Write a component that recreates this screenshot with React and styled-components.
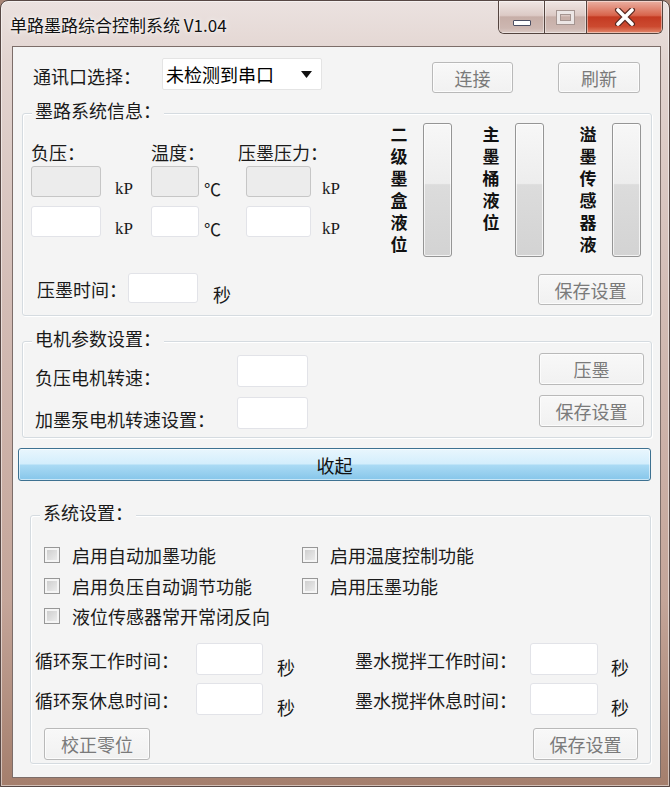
import React from "react";
import styled, { createGlobalStyle } from "styled-components";

const FONT = `"Noto Sans CJK SC", "Noto Sans", sans-serif`;

const GlobalStyle = createGlobalStyle`
  html, body { margin: 0; padding: 0; }
  body {
    width: 670px;
    height: 787px;
    overflow: hidden;
    background: #a88677;
    font-family: ${FONT};
  }
`;

const Window = styled.div`
  box-sizing: border-box;
  width: 670px;
  height: 787px;
  border: 1px solid #574845;
  border-radius: 8px 8px 0 0;
  background: linear-gradient(180deg, #ebe2e0 0px, #e2d4d0 60px, #d3bcb5 300px, #c4a599 600px, #a47e6c 787px);
  box-shadow: inset 0 0 0 1px rgba(255, 255, 255, 0.5);
  display: flex;
  flex-direction: column;
`;

const TitleBar = styled.div`
  height: 45px;
  flex-shrink: 0;
  display: flex;
  align-items: flex-start;
`;

const Title = styled.div`
  margin: 12px 0 0 9px;
  font-size: 17px;
  line-height: 24px;
  color: #111;
  text-shadow: 0 0 6px rgba(255, 255, 255, 0.9), 0 0 2px rgba(255, 255, 255, 0.9);
`;

const CaptionGroup = styled.div`
  margin-left: auto;
  margin-right: 6px;
  height: 32px;
  display: flex;
  border: 1px solid #54443f;
  border-top: none;
  border-radius: 0 0 6px 6px;
  overflow: hidden;
`;

const CaptionButton = styled.div`
  width: ${p => p.$w}px;
  display: flex;
  align-items: center;
  justify-content: center;
  border-left: ${p => (p.$first ? "none" : "1px solid #54443f")};
  box-shadow: inset 0 0 0 1px rgba(255, 255, 255, 0.45);
  background: ${p =>
    p.$close
      ? "linear-gradient(180deg, #eab0a2 0%, #d8644c 45%, #c43a22 50%, #cc4a30 80%, #e2886c 100%)"
      : "linear-gradient(180deg, #efe6e4 0%, #dccac5 45%, #c7aea7 50%, #cdb7b1 85%, #dccbc6 100%)"};
`;

const MinGlyph = styled.span`
  width: 16px;
  height: 4px;
  margin-top: 12px;
  background: #fff;
  border: 1px solid #4c4f63;
  border-radius: 1px;
`;

const MaxGlyph = styled.span`
  box-sizing: border-box;
  width: 17px;
  height: 13px;
  border: 3px solid #ece6e5;
  box-shadow: 0 0 0 1px #a59591, inset 0 0 0 1px #a59591;
`;

const Client = styled.div`
  box-sizing: border-box;
  margin: 0 8px 0 11px;
  height: 732px;
  border: 1px solid #7c6d69;
  background: #f4f4f4;
  display: flex;
  flex-direction: column;
  align-items: flex-start;
`;

const Text = styled.span`
  font-size: 18px;
  line-height: 24px;
  color: #1a1a1a;
  white-space: nowrap;
`;

const TopBar = styled.div`
  display: flex;
  align-items: center;
  height: 35px;
  margin-top: 11px;
  padding-left: 20px;
`;

const Combo = styled.div`
  box-sizing: border-box;
  align-self: flex-start;
  margin-left: 21px;
  width: 160px;
  height: 32px;
  background: #fff;
  border: 1px solid #e4e4e4;
  border-radius: 2px;
  display: flex;
  align-items: center;
  justify-content: space-between;
  padding: 0 9px 0 3px;
  font-size: 18px;
  color: #000;
`;

const Button = styled.button`
  box-sizing: border-box;
  flex-shrink: 0;
  width: ${p => p.$w}px;
  height: ${p => p.$h || 31}px;
  margin: 0;
  margin-left: ${p => (p.$ml === "auto" ? "auto" : `${p.$ml || 0}px`)};
  align-self: ${p => p.$self || "auto"};
  padding: 0;
  border: 1px solid #b9b9b9;
  border-radius: 3px;
  background: linear-gradient(180deg, #f8f8f8, #f1f1f1);
  box-shadow: inset 0 0 0 1px #fcfcfc;
  color: #7a7a7a;
  font-family: ${FONT};
  font-size: 18px;
  line-height: 1;
`;

const Input = styled.input`
  box-sizing: border-box;
  flex-shrink: 0;
  width: ${p => p.$w}px;
  height: ${p => p.$h || 31}px;
  margin: 0;
  padding: 0 4px;
  border: 1px solid ${p => (p.readOnly ? "#c6c6c6" : "#e2e3e8")};
  border-radius: 3px;
  background: ${p => (p.readOnly ? "#ececec" : "#fff")};
  font-family: ${FONT};
  font-size: 16px;
  outline: none;
`;

const GroupBox = styled.div`
  position: relative;
  box-sizing: border-box;
  flex-shrink: 0;
  width: ${p => p.$w}px;
  height: ${p => p.$h}px;
  margin: ${p => p.$mt}px 0 0 ${p => p.$ml}px;
  border: 1px solid #d5dbe0;
  border-radius: 3px;
  box-shadow: inset 1px 1px 0 #fff, 1px 1px 0 #fff;
  display: flex;
  flex-direction: ${p => p.$dir || "column"};
`;

const Legend = styled.span`
  position: absolute;
  top: -16px;
  left: 9px;
  padding: 0 3px;
  background: #f4f4f4;
  font-size: 18px;
  line-height: 24px;
  color: #1a1a1a;
`;

/* 墨路系统信息 */
const TopArea = styled.div`
  display: flex;
  margin-top: 9px;
  height: 134px;
`;

const Readings = styled.div`
  display: flex;
  flex-direction: column;
  padding: 17px 0 0 8px;
`;

const ReadRow = styled.div`
  display: grid;
  grid-template-columns: 120px 95px auto;
  height: ${p => p.$h}px;
  margin-top: ${p => p.$mt}px;
`;

const ReadCell = styled.div`
  display: flex;
  align-items: flex-end;
`;

const ShiftedText = styled.span`
  margin-left: -8px;
  font-size: 18px;
  line-height: 24px;
  color: #1a1a1a;
  white-space: nowrap;
`;

const Unit = styled.span`
  margin-left: ${p => p.$ml}px;
  margin-bottom: -2px;
  font-family: ${p => (p.$cjk ? FONT : `"Liberation Serif", "Noto Sans CJK SC", serif`)};
  font-size: 17px;
  line-height: 20px;
  color: #1a1a1a;
`;

const Levels = styled.div`
  display: flex;
  margin-left: auto;
  padding-right: 10px;
`;

const Level = styled.div`
  display: flex;
  gap: 15px;
  margin-left: ${p => p.$ml}px;
`;

const VLabel = styled.div`
  width: 18px;
  font-size: 17px;
  font-weight: bold;
  line-height: 22px;
  text-align: center;
  word-break: break-all;
  color: #111;
`;

const LevelBar = styled.div`
  box-sizing: border-box;
  width: 29px;
  height: 134px;
  border: 1px solid #959595;
  border-radius: 3px;
  background: linear-gradient(180deg, #f7f7f7 0%, #ededed 45%, #dcdcdc 46%, #d3d3d3 100%);
  box-shadow: inset 0 0 0 1px rgba(255, 255, 255, 0.7);
`;

const BottomRow = styled.div`
  display: flex;
  align-items: center;
  height: 32px;
  margin-top: 16px;
  padding: 0 8px 0 14px;
`;

const Sec = styled(Text)`
  align-self: flex-end;
  margin-left: ${p => p.$ml}px;
  margin-bottom: ${p => p.$mb || 0}px;
`;

const TimeInput = styled(Input)`
  align-self: flex-start;
  margin-left: 1px;
`;

/* 电机参数设置 */
const MotorGrid = styled.div`
  display: grid;
  grid-template-columns: 202px 71px;
  grid-auto-rows: 32px;
  row-gap: 10px;
  padding: 13px 0 0 12px;
`;

const BottomLabel = styled(Text)`
  align-self: end;
  margin-bottom: -2px;
`;

const ButtonColumn = styled.div`
  display: flex;
  flex-direction: column;
  gap: 10px;
  margin-left: auto;
  padding: 11px 7px 0 0;
`;

const CollapseBar = styled.div`
  box-sizing: border-box;
  flex-shrink: 0;
  width: 633px;
  height: 33px;
  margin: 10px 0 0 5px;
  border: 1px solid #3d7191;
  border-radius: 3px;
  background: linear-gradient(180deg, #e9f6fd 0%, #d3eefc 48%, #aadaf4 52%, #86c6ea 100%);
  box-shadow: inset 0 0 0 1px rgba(255, 255, 255, 0.55);
  display: flex;
  align-items: center;
  justify-content: center;
  font-size: 18px;
  color: #111;
`;

/* 系统设置 */
const CheckGrid = styled.div`
  display: grid;
  grid-template-columns: 258px auto;
  grid-auto-rows: 24px;
  row-gap: 6.5px;
  padding: 27px 0 0 13px;
`;

const CheckItem = styled.label`
  display: flex;
  align-items: center;
  gap: 12px;
  grid-column: ${p => (p.$span ? "1 / span 2" : "auto")};
`;

const CheckBox = styled.span`
  box-sizing: border-box;
  width: 16px;
  height: 16px;
  border: 1px solid #979797;
  background: linear-gradient(135deg, #c9c9c9, #f1f1f1);
  box-shadow: inset 0 0 0 2px #f5f5f5;
`;

const TimeRow = styled.div`
  display: flex;
  height: 32px;
  margin-top: ${p => p.$mt}px;
  padding-left: 4px;
`;

const TimeCell = styled.div`
  display: flex;
  align-items: center;
  width: ${p => p.$w}px;
`;

const TimeLabel = styled(Text)`
  width: ${p => p.$w}px;
  margin-top: 2px;
`;

const FooterRow = styled.div`
  display: flex;
  width: 100%;
  box-sizing: border-box;
  margin-top: 13px;
  padding: 0 12px 0 13px;
`;

const Arrow = () => (
  <svg width="11" height="7" viewBox="0 0 11 7">
    <path d="M0 0 H11 L5.5 7 Z" fill="#111" />
  </svg>
);

const CloseGlyph = () => (
  <svg width="22" height="18" viewBox="0 0 22 18">
    <path d="M4 2 L18 16 M18 2 L4 16" stroke="#5a2a22" strokeWidth="6" strokeLinecap="round" />
    <path d="M4 2 L18 16 M18 2 L4 16" stroke="#fff" strokeWidth="3.6" strokeLinecap="round" />
  </svg>
);

const levels = [
  { text: "二级墨盒液位", ml: 0 },
  { text: "主墨桶液位", ml: 30 },
  { text: "溢墨传感器液", ml: 35 }
];

const readCols = [
  { w: 70, unit: "kP", uml: 14 },
  { w: 48, unit: "℃", uml: 5, cjk: true },
  { w: 65, unit: "kP", uml: 11 }
];

const checks = [
  { text: "启用自动加墨功能" },
  { text: "启用温度控制功能" },
  { text: "启用负压自动调节功能" },
  { text: "启用压墨功能" },
  { text: "液位传感器常开常闭反向", span: true }
];

const timeRows = [
  { left: "循环泵工作时间：", right: "墨水搅拌工作时间：", mt: 15 },
  { left: "循环泵休息时间：", right: "墨水搅拌休息时间：", mt: 8 }
];

function ReadingRow({ readOnly, mt }) {
  return (
    <ReadRow $h={31} $mt={mt}>
      {readCols.map((c, i) => (
        <ReadCell key={i}>
          <Input readOnly={readOnly} $w={c.w} />
          <Unit $ml={c.uml} $cjk={c.cjk}>{c.unit}</Unit>
        </ReadCell>
      ))}
    </ReadRow>
  );
}

export default function App() {
  return (
    <>
      <GlobalStyle />
      <Window>
        <TitleBar>
          <Title>单路墨路综合控制系统 V1.04</Title>
          <CaptionGroup>
            <CaptionButton $w={45} $first>
              <MinGlyph />
            </CaptionButton>
            <CaptionButton $w={41}>
              <MaxGlyph />
            </CaptionButton>
            <CaptionButton $w={75} $close>
              <CloseGlyph />
            </CaptionButton>
          </CaptionGroup>
        </TitleBar>

        <Client>
          <TopBar>
            <Text>通讯口选择：</Text>
            <Combo>
              <span>未检测到串口</span>
              <Arrow />
            </Combo>
            <Button $w={81} $ml={110} $self="flex-end">连接</Button>
            <Button $w={82} $ml={45} $self="flex-end">刷新</Button>
          </TopBar>

          <GroupBox $w={630} $h={203} $mt={20} $ml={9}>
            <Legend>墨路系统信息：</Legend>
            <TopArea>
              <Readings>
                <ReadRow $h={24} $mt={0}>
                  <Text>负压：</Text>
                  <Text>温度：</Text>
                  <ShiftedText>压墨压力：</ShiftedText>
                </ReadRow>
                <ReadingRow readOnly mt={2} />
                <ReadingRow mt={9} />
              </Readings>
              <Levels>
                {levels.map(l => (
                  <Level key={l.text} $ml={l.ml}>
                    <VLabel>{l.text}</VLabel>
                    <LevelBar />
                  </Level>
                ))}
              </Levels>
            </TopArea>
            <BottomRow>
              <Text>压墨时间：</Text>
              <TimeInput $w={70} $h={30} />
              <Sec $ml={15} $mb={-1}>秒</Sec>
              <Button $w={105} $ml="auto" $self="flex-end">保存设置</Button>
            </BottomRow>
          </GroupBox>

          <GroupBox $w={630} $h={97} $mt={25} $ml={9} $dir="row">
            <Legend>电机参数设置：</Legend>
            <MotorGrid>
              <BottomLabel>负压电机转速：</BottomLabel>
              <Input $w={71} $h={32} />
              <BottomLabel>加墨泵电机转速设置：</BottomLabel>
              <Input $w={71} $h={32} />
            </MotorGrid>
            <ButtonColumn>
              <Button $w={105} $h={32}>压墨</Button>
              <Button $w={105} $h={32}>保存设置</Button>
            </ButtonColumn>
          </GroupBox>

          <CollapseBar>收起</CollapseBar>

          <GroupBox $w={621} $h={249} $mt={34} $ml={17}>
            <Legend>系统设置：</Legend>
            <CheckGrid>
              {checks.map(c => (
                <CheckItem key={c.text} $span={c.span}>
                  <CheckBox />
                  <Text>{c.text}</Text>
                </CheckItem>
              ))}
            </CheckGrid>
            {timeRows.map(r => (
              <TimeRow key={r.left} $mt={r.mt}>
                <TimeCell $w={320}>
                  <TimeLabel $w={161}>{r.left}</TimeLabel>
                  <Input $w={67} $h={32} />
                  <Sec $ml={14} $mb={-4}>秒</Sec>
                </TimeCell>
                <TimeCell $w={280}>
                  <TimeLabel $w={175}>{r.right}</TimeLabel>
                  <Input $w={68} $h={32} />
                  <Sec $ml={13} $mb={-4}>秒</Sec>
                </TimeCell>
              </TimeRow>
            ))}
            <FooterRow>
              <Button $w={106} $h={32}>校正零位</Button>
              <Button $w={105} $h={32} $ml="auto">保存设置</Button>
            </FooterRow>
          </GroupBox>
        </Client>
      </Window>
    </>
  );
}
